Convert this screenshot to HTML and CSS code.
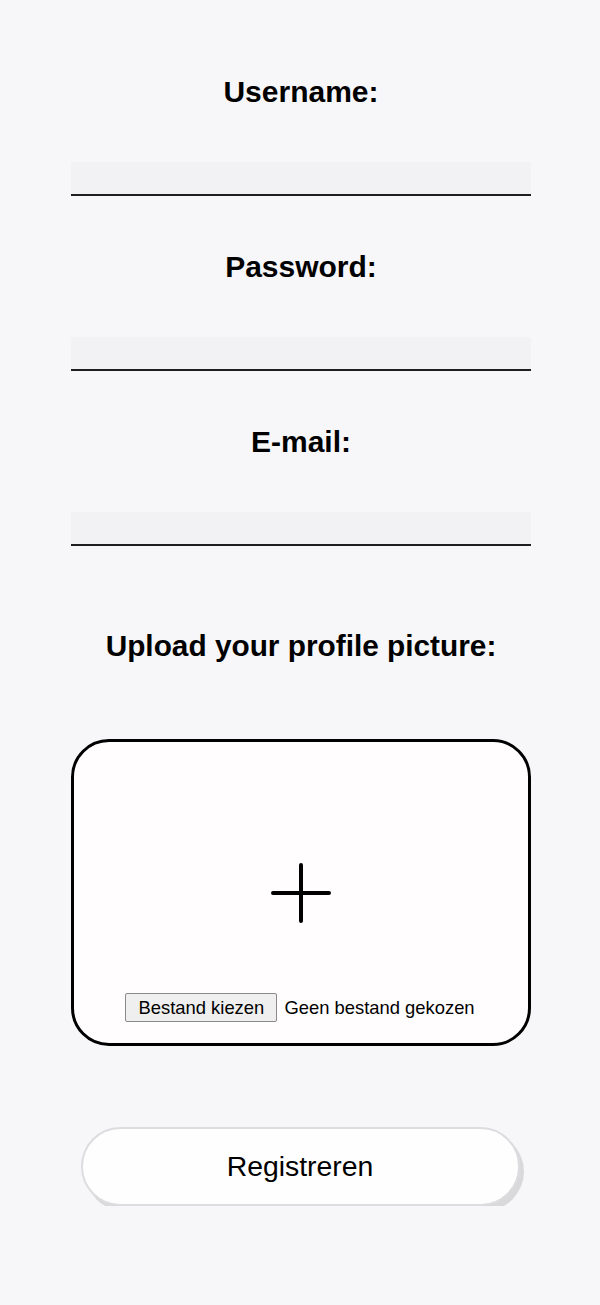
FILE: index.html
```html
<!DOCTYPE html>
<html lang="nl">
<head>
<meta charset="utf-8">
<title>Registreren</title>
<link rel="stylesheet" href="styles.css">
</head>
<body>
<form class="form">
  <div class="field">
    <label class="label" for="username">Username:</label>
    <input class="input" id="username" type="text">
  </div>
  <div class="field">
    <label class="label" for="password">Password:</label>
    <input class="input" id="password" type="password">
  </div>
  <div class="field">
    <label class="label" for="email">E-mail:</label>
    <input class="input" id="email" type="email">
  </div>
  <div class="upload">
    <div class="label upload-label">Upload your profile picture:</div>
    <div class="dropzone">
      <svg class="plus" width="62" height="62" viewBox="0 0 62 62" aria-hidden="true">
        <path d="M31 3 V59 M3 31 H59" stroke="#000" stroke-width="4" stroke-linecap="round" fill="none"/>
      </svg>
      <div class="file-row">
        <label class="file-btn">Bestand kiezen<input class="file-input" type="file"></label>
        <span class="file-status">Geen bestand gekozen</span>
      </div>
    </div>
  </div>
  <button class="submit" type="button">Registreren</button>
</form>
</body>
</html>
```

FILE: styles.css
```css
* { box-sizing: border-box; }

html, body {
  margin: 0;
  padding: 0;
  background: #f7f6f8;
  font-family: "Liberation Sans", Arial, Helvetica, sans-serif;
  color: #000;
}

.form {
  width: 460px;
  margin: 0 auto;
  padding-top: 75px;
  display: flex;
  flex-direction: column;
  transform: translateX(1px);
}

.field {
  display: flex;
  flex-direction: column;
  align-items: stretch;
  margin-bottom: 54px;
}

.label {
  display: block;
  text-align: center;
  font-size: 30px;
  line-height: 34px;
  font-weight: bold;
}

.input {
  margin-top: 53px;
  height: 34px;
  width: 100%;
  border: none;
  border-bottom: 2px solid #1e1e1e;
  background: #f2f1f3;
  font: inherit;
  font-size: 18px;
  padding: 0 8px;
  outline: none;
}

.upload {
  margin-top: 29px;
  display: flex;
  flex-direction: column;
}

.upload-label {
  font-size: 29.8px;
  margin-bottom: 76px;
}

.dropzone {
  height: 307px;
  border: 3px solid #000;
  border-radius: 38px;
  background: #fffdfe;
  display: flex;
  flex-direction: column;
  align-items: center;
}

.plus {
  margin-top: 120px;
}

.file-row {
  margin-top: 69px;
  display: flex;
  align-items: center;
  gap: 7px;
  font-size: 18.4px;
  transform: translateX(-1px);
}

.file-btn {
  display: inline-flex;
  align-items: center;
  justify-content: center;
  height: 29px;
  width: 152px;
  border: 1px solid #8a8a8a;
  border-radius: 2px;
  background: #efefef;
  font-size: 18.4px;
  cursor: pointer;
}

.file-input {
  display: none;
}

.submit {
  margin: 81px auto 0;
  width: 439px;
  height: 79px;
  transform: translateX(-1px);
  border: 2px solid #dddcdf;
  border-radius: 40px;
  background: #fffeff;
  box-shadow: 4px 5px 0 #d9d8db;
  font-family: "Liberation Sans", Arial, Helvetica, sans-serif;
  font-size: 28.4px;
  color: #000;
  cursor: pointer;
}
```
